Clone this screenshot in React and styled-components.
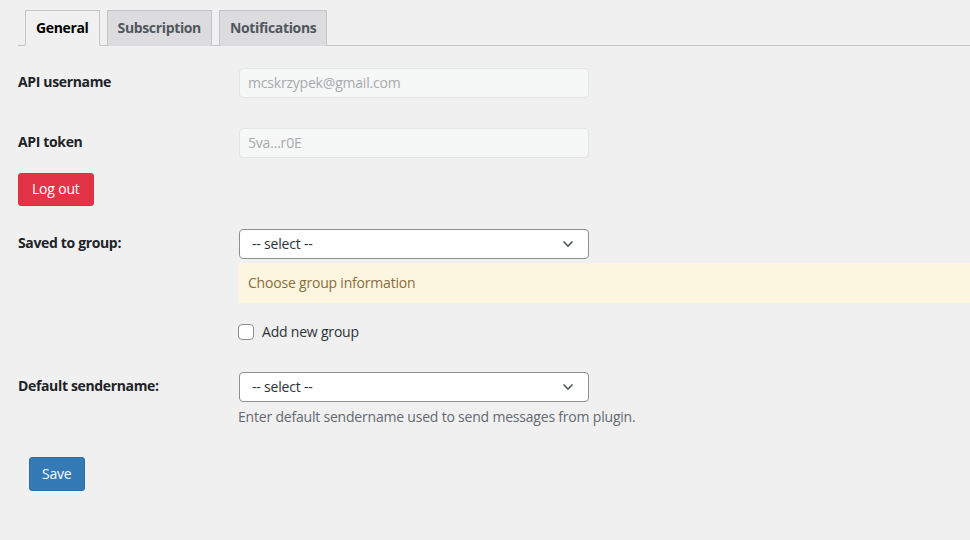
import React, { useState } from "react";
import styled, { createGlobalStyle } from "styled-components";

const GlobalStyle = createGlobalStyle`
  html, body {
    margin: 0;
    padding: 0;
    background: #f0f0f1;
  }
  body {
    font-family: "Open Sans", "Noto Sans", sans-serif;
    font-size: 14px;
    letter-spacing: -0.2px;
    color: #1d2327;
  }
  * {
    box-sizing: border-box;
  }
`;

const tabs = ["General", "Subscription", "Notifications"];

function Chevron() {
  return (
    <svg width="12" height="8" viewBox="0 0 12 8" fill="none">
      <path d="M1.5 1.5L6 6L10.5 1.5" stroke="#50575e" strokeWidth="1.6" />
    </svg>
  );
}

function SelectBox({ value }) {
  return (
    <Select>
      <span>{value}</span>
      <Chevron />
    </Select>
  );
}

export default function App() {
  const [active, setActive] = useState("General");
  const [addGroup, setAddGroup] = useState(false);

  return (
    <Page>
      <GlobalStyle />
      <TabBar>
        {tabs.map((t) => (
          <Tab key={t} active={t === active} onClick={() => setActive(t)}>
            {t}
          </Tab>
        ))}
      </TabBar>

      <Form>
        <Row>
          <Label>API username</Label>
          <ReadOnlyInput>mcskrzypek@gmail.com</ReadOnlyInput>
        </Row>
        <Row top={30}>
          <Label>API token</Label>
          <ReadOnlyInput>5va...r0E</ReadOnlyInput>
        </Row>

        <LogoutButton>Log out</LogoutButton>

        <Row top={23}>
          <Label>Saved to group:</Label>
          <Field>
            <SelectBox value="-- select --" />
            <Notice>Choose group information</Notice>
            <CheckRow onClick={() => setAddGroup(!addGroup)}>
              <Checkbox checked={addGroup} />
              Add new group
            </CheckRow>
          </Field>
        </Row>

        <Row top={32}>
          <Label>Default sendername:</Label>
          <Field>
            <SelectBox value="-- select --" />
            <Description>
              Enter default sendername used to send messages from plugin.
            </Description>
          </Field>
        </Row>

        <SaveButton>Save</SaveButton>
      </Form>
    </Page>
  );
}

const Page = styled.div`
  width: 970px;
  height: 540px;
  overflow: hidden;
  padding-top: 10px;
`;

const TabBar = styled.div`
  display: flex;
  gap: 7px;
  margin-left: 18px;
  padding-left: 7px;
  border-bottom: 1px solid #c3c4c7;
  height: 36px;
`;

const Tab = styled.div`
  height: 36px;
  padding: 0 10px 2px;
  display: flex;
  align-items: center;
  font-weight: 700;
  font-size: 14px;
  letter-spacing: -0.35px;
  border: 1px solid #c3c4c7;
  border-bottom: ${(p) => (p.active ? "1px solid #f0f0f1" : "none")};
  background: ${(p) => (p.active ? "#f0f0f1" : "#dcdcde")};
  color: ${(p) => (p.active ? "#000" : "#50575e")};
  cursor: pointer;
`;

const Form = styled.div`
  padding: 22px 0 0 18px;
  display: flex;
  flex-direction: column;
  align-items: flex-start;
`;

const Row = styled.div`
  display: grid;
  grid-template-columns: 221px 1fr;
  width: 100%;
  margin-top: ${(p) => p.top || 0}px;
`;

const Label = styled.div`
  font-weight: 700;
  letter-spacing: -0.35px;
  line-height: 28px;
  color: #1d2327;
`;

const Field = styled.div`
  display: flex;
  flex-direction: column;
  align-items: flex-start;
`;

const ReadOnlyInput = styled.div`
  width: 350px;
  height: 30px;
  padding: 0 8px 2px;
  display: flex;
  align-items: center;
  background: #f6f7f7;
  border: 1px solid #e2e4e7;
  border-radius: 4px;
  color: #a7aaad;
`;

const LogoutButton = styled.button`
  margin-top: 15px;
  height: 33px;
  padding: 0 13px 2px;
  font: inherit;
  letter-spacing: inherit;
  color: #fff;
  background: #e13547;
  border: 1px solid #d9303f;
  border-radius: 3px;
`;

const Select = styled.div`
  width: 350px;
  height: 30px;
  padding: 0 14px 2px 12px;
  display: flex;
  align-items: center;
  justify-content: space-between;
  background: #fff;
  border: 1px solid #8c8f94;
  border-radius: 4px;
  color: #2c3338;

  svg {
    margin-top: 2px;
  }
`;

const Notice = styled.div`
  margin-top: 4px;
  width: calc(100% + 1px);
  margin-left: -1px;
  height: 40px;
  padding: 0 10px 1px;
  display: flex;
  align-items: center;
  background: #fcf6e1;
  color: #8a6d3b;
`;

const CheckRow = styled.label`
  margin-top: 21px;
  display: flex;
  align-items: center;
  gap: 8px;
  margin-left: -1px;
  line-height: 16px;
  color: #2c3338;
  cursor: pointer;
`;

const Checkbox = styled.span`
  width: 16px;
  height: 16px;
  border: 1px solid #8c8f94;
  border-radius: 4px;
  background: ${(p) => (p.checked ? "#2271b1" : "#fff")};
`;

const Description = styled.div`
  margin-top: 5px;
  margin-left: -1px;
  line-height: 20px;
  color: #646970;
`;

const SaveButton = styled.button`
  margin: 30px 0 0 11px;
  height: 34px;
  padding: 0 12px 2px;
  font: inherit;
  letter-spacing: inherit;
  color: #fff;
  background: #337ab7;
  border: 1px solid #2e6da4;
  border-radius: 3px;
`;
